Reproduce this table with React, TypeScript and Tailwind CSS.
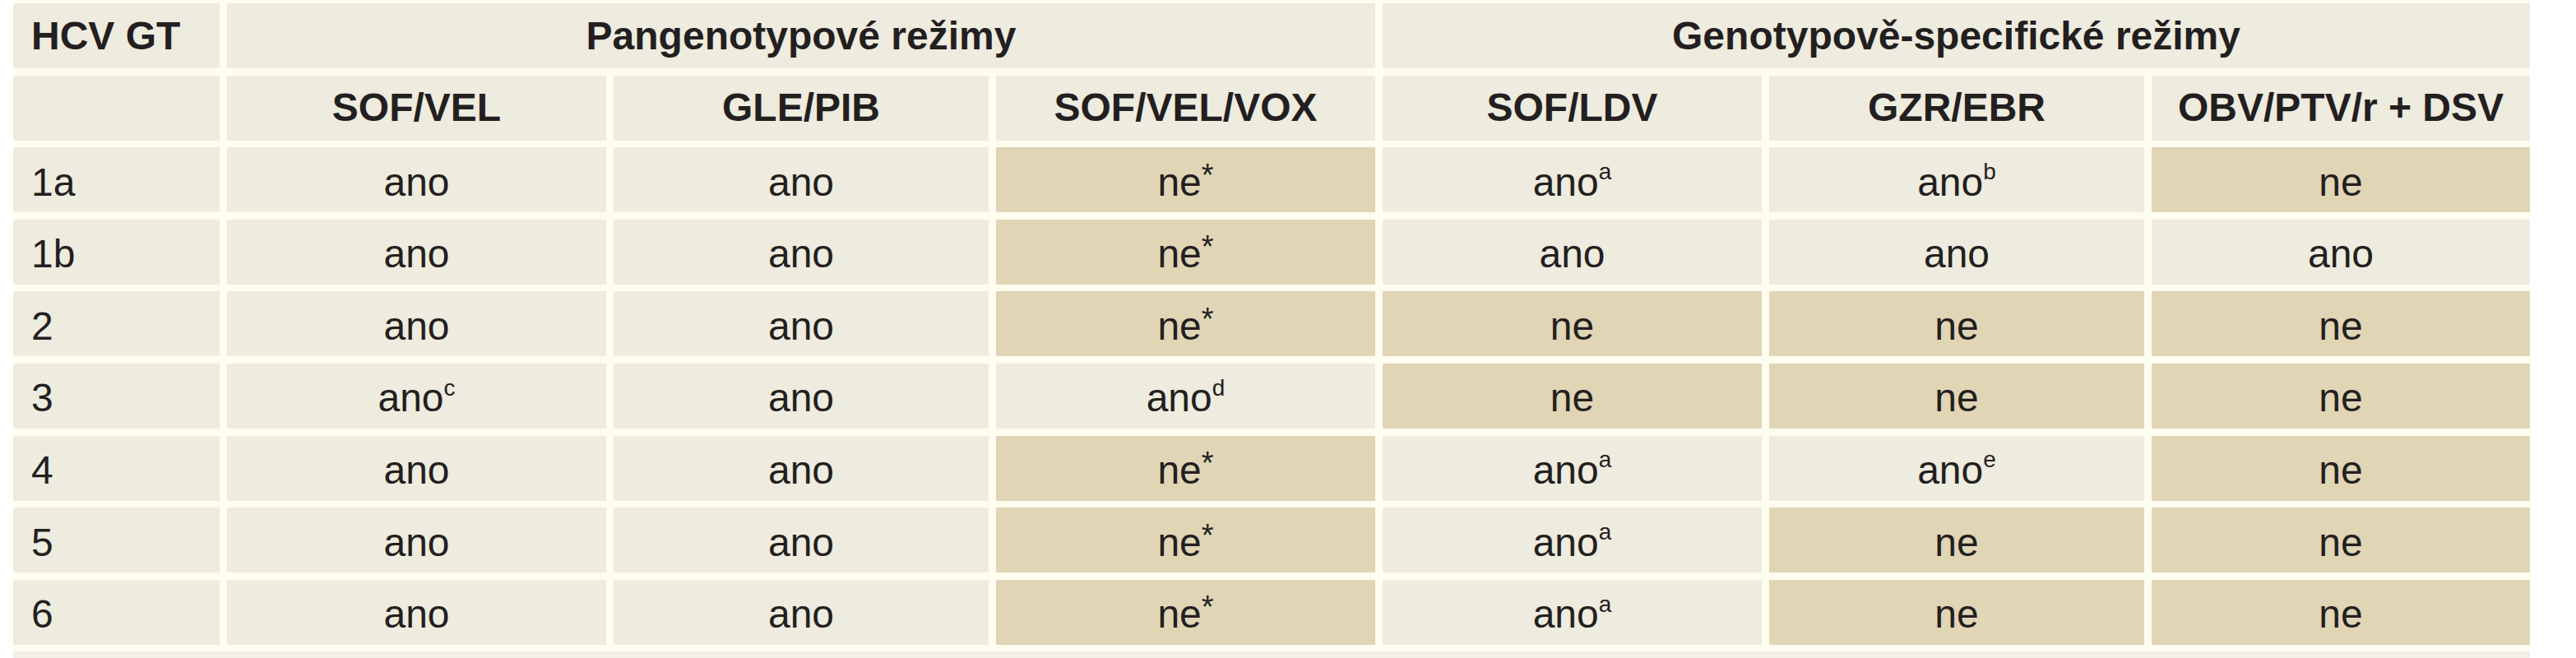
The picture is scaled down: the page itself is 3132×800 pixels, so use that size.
import React from "react";

type Cell = { t: string; s?: string; dark?: boolean };

const rows: { gt: string; cells: Cell[] }[] = [
  {
    gt: "1a",
    cells: [
      { t: "ano" },
      { t: "ano" },
      { t: "ne", s: "*", dark: true },
      { t: "ano", s: "a" },
      { t: "ano", s: "b" },
      { t: "ne", dark: true },
    ],
  },
  {
    gt: "1b",
    cells: [
      { t: "ano" },
      { t: "ano" },
      { t: "ne", s: "*", dark: true },
      { t: "ano" },
      { t: "ano" },
      { t: "ano" },
    ],
  },
  {
    gt: "2",
    cells: [
      { t: "ano" },
      { t: "ano" },
      { t: "ne", s: "*", dark: true },
      { t: "ne", dark: true },
      { t: "ne", dark: true },
      { t: "ne", dark: true },
    ],
  },
  {
    gt: "3",
    cells: [
      { t: "ano", s: "c" },
      { t: "ano" },
      { t: "ano", s: "d" },
      { t: "ne", dark: true },
      { t: "ne", dark: true },
      { t: "ne", dark: true },
    ],
  },
  {
    gt: "4",
    cells: [
      { t: "ano" },
      { t: "ano" },
      { t: "ne", s: "*", dark: true },
      { t: "ano", s: "a" },
      { t: "ano", s: "e" },
      { t: "ne", dark: true },
    ],
  },
  {
    gt: "5",
    cells: [
      { t: "ano" },
      { t: "ano" },
      { t: "ne", s: "*", dark: true },
      { t: "ano", s: "a" },
      { t: "ne", dark: true },
      { t: "ne", dark: true },
    ],
  },
  {
    gt: "6",
    cells: [
      { t: "ano" },
      { t: "ano" },
      { t: "ne", s: "*", dark: true },
      { t: "ano", s: "a" },
      { t: "ne", dark: true },
      { t: "ne", dark: true },
    ],
  },
];

const regimens = ["SOF/VEL", "GLE/PIB", "SOF/VEL/VOX", "SOF/LDV", "GZR/EBR", "OBV/PTV/r + DSV"];

export default function App() {
  return (
    <div
      className="w-[3132px] h-[800px] bg-white pl-[16px] overflow-hidden text-[#231f20]"
      style={{ fontFamily: '"Liberation Sans", Arial, sans-serif' }}
    >
      <div className="w-[3060px] bg-[#fffcf0] pt-[4px]">
        <div className="grid grid-cols-[251px_461px_456px_461px_461px_456px_460px] auto-rows-[79px] gap-x-[9px] gap-y-[8.6px]">
          {/* header row */}
          <div className="bg-[#eeebdf] flex items-center pl-[22px] text-[48px] font-bold">HCV GT</div>
          <div className="col-span-3 bg-[#eeebdf] flex items-center justify-center text-[48px] font-bold">
            Pangenotypové režimy
          </div>
          <div className="col-span-3 bg-[#eeebdf] flex items-center justify-center text-[48px] font-bold">
            Genotypově-specifické režimy
          </div>

          {/* regimen names */}
          <div className="bg-[#eeebdf]"></div>
          {regimens.map((r) => (
            <div key={r} className="bg-[#eeebdf] flex items-center justify-center text-[48px] font-bold">
              {r}
            </div>
          ))}

          {rows.map((row) => (
            <React.Fragment key={row.gt}>
              <div className="bg-[#eeebdf] flex items-center pl-[22px] pt-[6px] text-[48px]">{row.gt}</div>
              {row.cells.map((c, i) => (
                <div
                  key={i}
                  className={`${c.dark ? "bg-[#e0d5b5]" : "bg-[#eeebdf]"} flex items-center justify-center pt-[6px] text-[48px]`}
                >
                  <span>
                    {c.t}
                    {c.s === "*" ? (
                      <span className="relative -top-[12px] text-[38px]">*</span>
                    ) : (
                      c.s && <sup className="text-[28px] -top-[0.7em]">{c.s}</sup>
                    )}
                  </span>
                </div>
              ))}
            </React.Fragment>
          ))}
        </div>
        <div className="h-[16px] pt-[8px]">
          <div className="h-full bg-[#f2efe6]"></div>
        </div>
      </div>
    </div>
  );
}
